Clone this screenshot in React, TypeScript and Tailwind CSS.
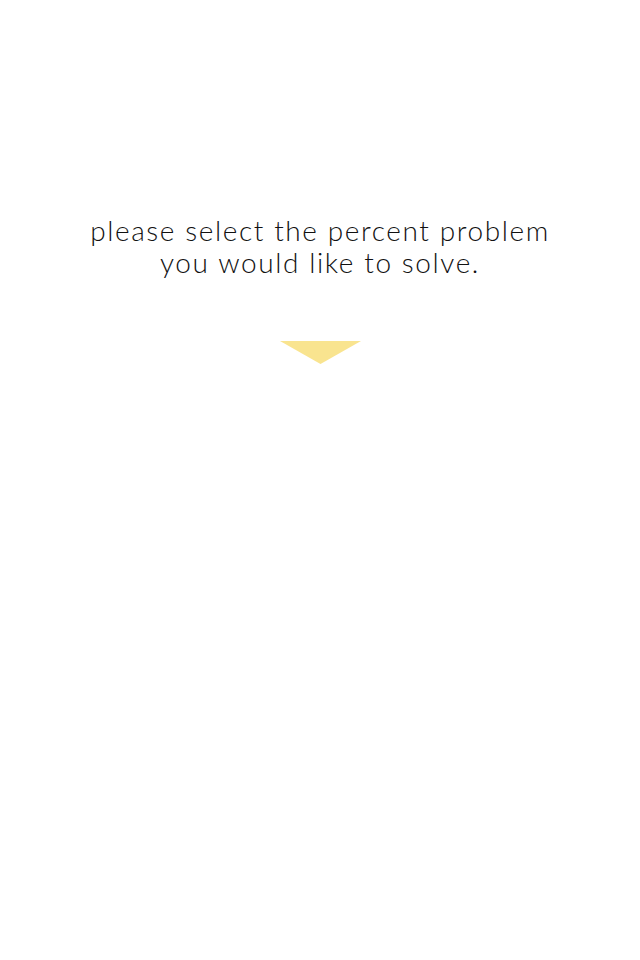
export default function App() {
  return (
    <div className="flex min-h-[960px] w-full flex-col items-center bg-white pt-[214px]">
      <p
        className="text-center text-[28px] font-light leading-[32px] tracking-[1.6px] text-[#111111]"
        style={{ fontFamily: "Lato, 'Open Sans', sans-serif" }}
      >
        please select the percent problem
        <br />
        you would like to solve.
      </p>
      {/* Down arrow */}
      <svg className="mt-[63px]" width="81" height="23" viewBox="0 0 81 23" aria-hidden="true">
        <polygon points="0,0 81,0 40.5,23" fill="#f9e48f" />
      </svg>
    </div>
  );
}
